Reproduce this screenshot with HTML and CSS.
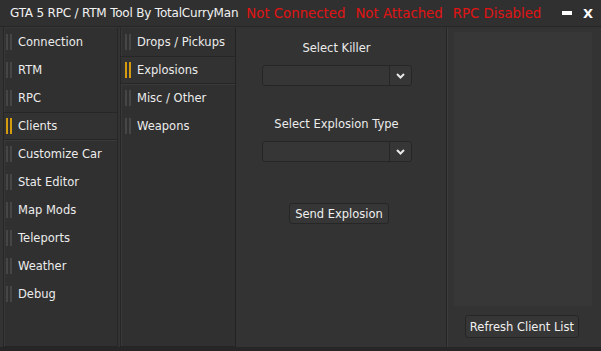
FILE: index.html
```html
<!DOCTYPE html>
<html lang="en">
<head>
  <meta charset="UTF-8" />
  <title>GTA 5 RPC / RTM Tool</title>
  <link rel="stylesheet" href="styles.css">
</head>
<body>

  <!-- Title bar -->
  <div class="titlebar">
    <span class="app-title">GTA 5 RPC / RTM Tool By TotalCurryMan</span>
    <span class="status">Not Connected</span>
    <span class="status">Not Attached</span>
    <span class="status">RPC Disabled</span>
    <span class="win-btn min"></span>
    <span class="win-btn close">X</span>
  </div>

  <div class="window">
    <!-- Main menu -->
    <div class="nav">
      <div class="item"><span class="bars"></span>Connection</div>
      <div class="item"><span class="bars"></span>RTM</div>
      <div class="item"><span class="bars"></span>RPC</div>
      <div class="item active"><span class="bars"></span>Clients</div>
      <div class="item"><span class="bars"></span>Customize Car</div>
      <div class="item"><span class="bars"></span>Stat Editor</div>
      <div class="item"><span class="bars"></span>Map Mods</div>
      <div class="item"><span class="bars"></span>Teleports</div>
      <div class="item"><span class="bars"></span>Weather</div>
      <div class="item"><span class="bars"></span>Debug</div>
    </div>

    <!-- Sub menu -->
    <div class="nav sub">
      <div class="item"><span class="bars"></span>Drops / Pickups</div>
      <div class="item active"><span class="bars"></span>Explosions</div>
      <div class="item"><span class="bars"></span>Misc / Other</div>
      <div class="item"><span class="bars"></span>Weapons</div>
    </div>

    <!-- Explosion options -->
    <div class="main">
      <div class="label">Select Killer</div>
      <div class="combo"><span class="combo-text"></span><span class="combo-arrow"><svg width="9" height="6" viewBox="0 0 9 6"><path d="M1 1 L4.5 4.5 L8 1" fill="none" stroke="#e8e8e8" stroke-width="2"/></svg></span></div>
      <div class="label second">Select Explosion Type</div>
      <div class="combo"><span class="combo-text"></span><span class="combo-arrow"><svg width="9" height="6" viewBox="0 0 9 6"><path d="M1 1 L4.5 4.5 L8 1" fill="none" stroke="#e8e8e8" stroke-width="2"/></svg></span></div>
      <button class="btn send">Send Explosion</button>
    </div>

    <!-- Client list -->
    <div class="side">
      <div class="client-list"></div>
      <button class="btn refresh">Refresh Client List</button>
    </div>
  </div>

</body>
</html>
```

FILE: styles.css
```css
/* Window */
body {
  margin: 0;
  width: 601px;
  height: 351px;
  overflow: hidden;
  background: #2a2a2a;
  font-family: Tahoma, "DejaVu Sans", Verdana, sans-serif;
  font-size: 11.5px;
  color: #ececec;
}

.titlebar {
  height: 26px;
  display: flex;
  align-items: center;
  padding-left: 10px;
  background: #303030;
  border-bottom: 1px solid #262626;
}

.app-title {
  font-size: 12px;
  color: #f2f2f2;
  margin-right: 8px;
  letter-spacing: -0.2px;
}

.status {
  color: #e01414;
  font-size: 13.3px;
  margin-right: 10px;
}

.win-btn.min {
  margin-left: auto;
  width: 10px;
  height: 4px;
  background: #ffffff;
  margin-right: 11px;
}

.win-btn.close {
  color: #ffffff;
  font-weight: bold;
  font-size: 13px;
  margin-right: 8px;
}

.window {
  display: flex;
  height: 320px;
  padding-left: 3px;
  background: #333333;
  border-bottom: 4px solid #262626;
}

.window > div {
  flex-shrink: 0;
}

/* Menus */
.nav {
  width: 113px;
  background: #303030;
  border: 1px solid #262626;
  border-top-color: #363636;
  border-radius: 3px 3px 0 0;
  box-shadow: inset 1px 0 0 #393939;
}

.nav.sub {
  width: 114px;
  margin-left: 2px;
  border-right-color: #232323;
}

.item {
  box-sizing: border-box;
  display: flex;
  align-items: center;
  height: 28px;
  padding-left: 2px;
  border: 1px solid transparent;
  border-left: none;
  border-right: none;
}

.nav.sub .item {
  padding-left: 4px;
}

.item.active {
  background: #323232;
  border-color: #262626;
  box-shadow: 0 1px 0 #3a3a3a;
}

.bars {
  width: 2px;
  height: 16px;
  margin-right: 10px;
  background: #464646;
  box-shadow: 4px 0 0 #464646;
}

.item.active .bars {
  background: #d49a10;
  box-shadow: 4px 0 0 #d49a10;
}

/* Center panel */
.main {
  width: 201px;
  display: flex;
  flex-direction: column;
  align-items: center;
  padding: 13px 9px 0 0;
  border-right: 1px solid #262626;
  box-shadow: 1px 0 0 #3c3c3c;
}

.label {
  height: 16px;
  line-height: 16px;
}

.label.second {
  margin-top: 30px;
}

.combo {
  box-sizing: border-box;
  display: flex;
  width: 150px;
  height: 21px;
  margin-top: 9px;
  border: 1px solid #262626;
  border-radius: 3px;
  background: #363636;
}

.combo-text {
  flex: 1;
}

.combo-arrow {
  width: 21px;
  border-left: 1px solid #262626;
  display: flex;
  align-items: center;
  justify-content: center;
}

.btn {
  box-sizing: border-box;
  font-family: inherit;
  font-size: 11.5px;
  color: #f0f0f0;
  background: #363636;
  border: 1px solid #262626;
  border-radius: 3px;
  padding: 0 5px;
  height: 21px;
}

.btn.send {
  margin-top: 41px;
  margin-left: 5px;
}

/* Right panel */
.side {
  width: 139px;
  display: flex;
  flex-direction: column;
  align-items: flex-end;
  padding: 5px 7px 0 7px;
}

.client-list {
  width: 138px;
  height: 274px;
  align-self: flex-start;
  background: #373737;
}

.btn.refresh {
  margin-top: 9px;
  margin-right: 14px;
  height: 23px;
  padding: 0 4px;
}
```
